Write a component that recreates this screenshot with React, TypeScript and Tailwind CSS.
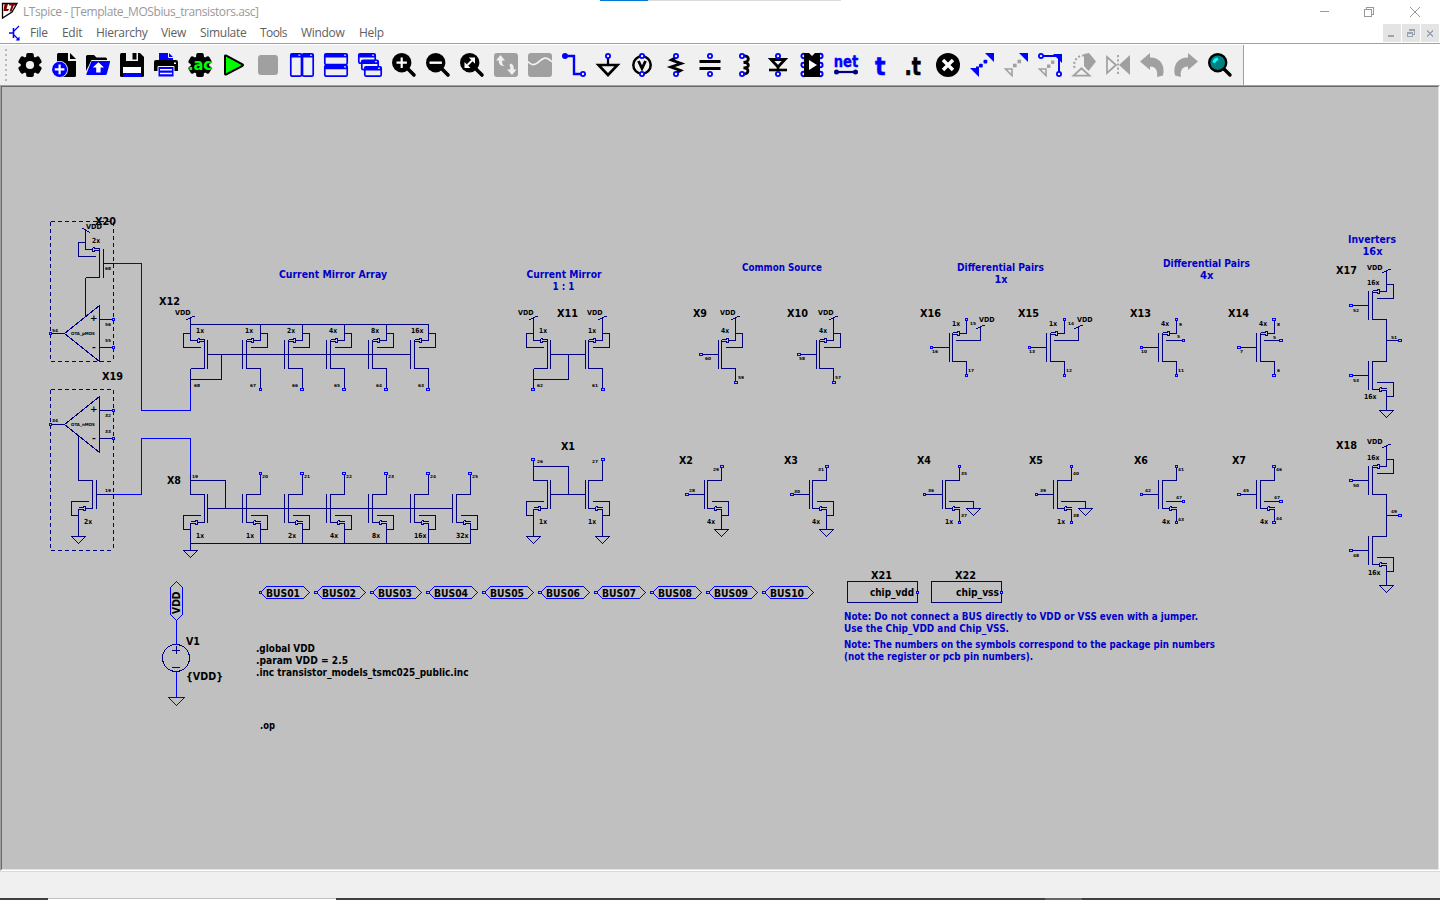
import React from "react";

const NAVY = "#000080";
const BLUE = "#0000ff";
const B = "#0000ff";
const G = "#a0a0a0";

/* ---------- toolbar icons, each on a 24 x 24 grid ---------- */

const Gear = ({ hole }: { hole: boolean }) => (
  <g>
    <circle cx="12" cy="12" r="9.3" />
    <rect x="8.2" y="0" width="7.6" height="24" rx="1.8" />
    <rect x="8.2" y="0" width="7.6" height="24" rx="1.8" transform="rotate(60 12 12)" />
    <rect x="8.2" y="0" width="7.6" height="24" rx="1.8" transform="rotate(120 12 12)" />
    {hole && <circle cx="12" cy="12" r="4.1" fill="#f0f0f0" />}
  </g>
);

const Magnifier = () => (
  <g>
    <circle cx="9.7" cy="9.7" r="9.7" />
    <path d="M16 16L22 22" stroke="#000" strokeWidth="3.6" strokeLinecap="round" />
  </g>
);

const Pin = ({ x, y }: { x: number; y: number }) => (
  <circle cx={x} cy={y} r="2.1" fill="#f0f0f0" stroke={B} strokeWidth="1.8" />
);

const Win = ({ x, y, w, h }: { x: number; y: number; w: number; h: number }) => (
  <g>
    <rect x={x + 0.8} y={y + 0.8} width={w - 1.6} height={h - 1.6} rx="1.4" fill="#f0f0f0" stroke={B} strokeWidth="1.7" />
    <rect x={x + 0.5} y={y + 0.5} width={w - 1} height="4" rx="1" fill={B} />
    <path d={`M${x + w - 4} ${y + 2.2}h2`} stroke="#fff" strokeWidth="1" />
  </g>
);

const icons: React.ReactNode[] = [
  <Gear hole />,
  <g>
    <path d="M5 1.5Q5 0 6.5 0H16V8H24V22.5Q24 24 22.500 24H5z" />
    <path d="M18 0L24 6H18z" />
    <circle cx="7.6" cy="16.4" r="8.4" fill="#f0f0f0" />
    <circle cx="7.6" cy="16.4" r="7.6" fill={B} />
    <path d="M2.800 16.400h9.600M7.600 11.600v9.600" stroke="#fff" strokeWidth="2.2" />
  </g>,
  <g>
    <path d="M0 3.500Q0 2 1.500 2H8L10.500 4.500H19.500Q21 4.500 21 6V7H5.500L0 18z" />
    <path d="M5.500 8H23.500Q24.300 8 24 9.200L20.800 21Q20.500 22 19.300 22H1Q0 22 .4 21z" fill={B} />
    <path d="M12.400 9.200L18 14.500H14.600V19.500H10.200V14.500H6.800z" fill="#fff" />
  </g>,
  <g>
    <path d="M1.500 0H20L24 4V22.500Q24 24 22.500 24H1.500Q0 24 0 22.500V1.500Q0 0 1.500 0z" />
    <path d="M6 0H18V8H6z" fill="#f0f0f0" />
    <path d="M12.500 0H16.500V6.500H12.500z" />
    <path d="M3 14H21V20H3z" fill="#fff" />
    <path d="M3 20H21V24H3z" fill={B} />
  </g>,
  <g>
    <path d="M5 0H15L19 4V8H5z" fill={B} />
    <path d="M14.500 0V4.500H19" stroke="#f0f0f0" strokeWidth="1" fill="none" />
    <path d="M2 7H22Q24 7 24 9V18H0V9Q0 7 2 7z" />
    <path d="M4 13.500H20V24H4z" fill={B} stroke="#f0f0f0" strokeWidth="1" />
    <path d="M6 16.800H18M6 20.500H18" stroke="#fff" strokeWidth="1.500" />
    <rect x="20" y="9.500" width="2" height="1.500" fill="#fff" />
  </g>,
  <g>
    <Gear hole={false} />
    <text x="0" y="16.500" fontSize="16" fontWeight="700" fontFamily='"DejaVu Sans"' fill="#00ff00" textLength="24" lengthAdjust="spacingAndGlyphs">
      .ac
    </text>
  </g>,
  <path d="M3 3.200Q3 2 4.300 2.700L20.500 11.300Q21.600 12 20.500 12.800L4.300 21.300Q3 22 3 20.800z" fill="#00ff00" stroke="#000" strokeWidth="2" />,
  <rect x="2" y="2" width="20" height="20" rx="3" fill={G} />,
  <g>
    <Win x={0} y={0} w={12.3} h={24} />
    <Win x={11.7} y={0} w={12.3} h={24} />
  </g>,
  <g>
    <Win x={0} y={0} w={24} h={12.3} />
    <Win x={0} y={11.7} w={24} h={12.3} />
  </g>,
  <g>
    <Win x={0} y={0} w={18} h={11} />
    <Win x={3} y={6.500} w={18} h={11} />
    <Win x={6} y={13} w={18} h={11} />
  </g>,
  <g>
    <Magnifier />
    <path d="M4.500 9.700h10.400M9.700 4.500v10.400" stroke="#fff" strokeWidth="2.200" />
  </g>,
  <g>
    <Magnifier />
    <path d="M3.500 9.700h12.400" stroke="#fff" strokeWidth="2.400" />
  </g>,
  <g>
    <Magnifier />
    <path d="M7.500 12L12 7.500" stroke="#fff" strokeWidth="2" />
    <path d="M8.800 4.500H15V10.700zM4.500 9V15H10.500z" fill="#fff" />
  </g>,
  <g>
    <rect width="24" height="24" rx="3" fill={G} />
    <path d="M6.500 2L11 7.500H8.200V10Q8.500 12 10.500 13Q5 13 4.800 9V7.500H2zM18 22L22.500 16.500H19.700V14Q19.500 11.500 17 10.500Q14.500 11.500 16.300 14V16.500H13z" fill="#f0f0f0" />
  </g>,
  <g>
    <rect width="24" height="24" rx="3" fill={G} />
    <path d="M0 8.500C3 12.500 6 12.500 10 9.500C15 5 18 2.500 24 9" fill="none" stroke="#f0f0f0" strokeWidth="1.700" />
  </g>,
  <g>
    <path d="M2.500 3H12V21H19" fill="none" stroke={B} strokeWidth="2.400" />
    <circle cx="3" cy="3" r="3" fill={B} />
    <Pin x={21} y={21} />
  </g>,
  <g>
    <path d="M12 5V12" stroke="#000" strokeWidth="2.200" />
    <path d="M2.500 12H21.500L12 22z" fill="none" stroke="#000" strokeWidth="2.600" />
    <Pin x={12} y={3} />
  </g>,
  <g>
    <circle cx="12" cy="12" r="8.700" fill="none" stroke="#000" strokeWidth="2.500" />
    <path d="M8.500 8L12 15.500L15.500 8" fill="none" stroke="#000" strokeWidth="2.800" />
    <Pin x={12} y={3} />
    <Pin x={12} y={21} />
  </g>,
  <g>
    <path d="M12 4.500L7.500 7L17 10.500L7 14L16.500 17.500L12 20" fill="none" stroke="#000" strokeWidth="2.900" />
    <Pin x={12} y={3} />
    <Pin x={12} y={21} />
  </g>,
  <g>
    <path d="M1.500 8.500H22.500M1.500 15.500H22.500" stroke="#000" strokeWidth="3" />
    <Pin x={12} y={3} />
    <Pin x={12} y={21} />
  </g>,
  <g>
    <path d="M11 3C18 2 18 9 11.500 9.500C18 9 18 15.500 11.500 14.800C18 15 17 21.500 11 21" fill="none" stroke="#000" strokeWidth="2.800" />
    <Pin x={10} y={3} />
    <Pin x={10} y={21} />
  </g>,
  <g>
    <path d="M5 6.500H19L12 14z" fill="none" stroke="#000" strokeWidth="2.800" />
    <path d="M3 17H21" stroke="#000" strokeWidth="2.600" />
    <path d="M12 14V18" stroke="#000" strokeWidth="2.500" />
    <Pin x={12} y={3} />
    <Pin x={12} y={21} />
  </g>,
  <g>
    {[3, 12, 21].map((y) => (
      <g key={y} fill="none" stroke={B} strokeWidth="1.900">
        <circle cx="3.600" cy={y} r="2.200" />
        <circle cx="20.400" cy={y} r="2.200" />
      </g>
    ))}
    <path d="M4 0H9L12 3L15 0H20V24H4z" />
    <path d="M9 7L17 12L9 17z" fill="#fff" />
  </g>,
  <g>
    <text x="-.3" y="13.500" fontSize="15" fontWeight="700" fontFamily='"DejaVu Sans"' fill={B} textLength="24.500" lengthAdjust="spacingAndGlyphs" stroke={B} strokeWidth=".4">
      net
    </text>
    <path d="M3 19H21" stroke={NAVY} strokeWidth="2.200" />
    <circle cx="2.500" cy="19" r="2.500" fill={NAVY} />
    <circle cx="21.500" cy="19" r="2.500" fill={NAVY} />
  </g>,
  <text x="7" y="21.500" fontSize="24" fontWeight="700" fontFamily='"DejaVu Sans"' fill={B} textLength="10.500" lengthAdjust="spacingAndGlyphs" stroke={B} strokeWidth=".5">
    t
  </text>,
  <text x="2.500" y="21.500" fontSize="24" fontWeight="700" fontFamily='"DejaVu Sans"' textLength="16.500" lengthAdjust="spacingAndGlyphs" stroke="#000" strokeWidth=".5">
    .t
  </text>,
  <g>
    <circle cx="12" cy="12" r="12" />
    <path d="M7 7L17 17M17 7L7 17" stroke="#fff" strokeWidth="3.400" />
  </g>,
  <g fill={B}>
    <path d="M15 0H24V9zM0 15H9V24z" />
    <rect x="9" y="10.700" width="3.800" height="3.800" rx="1" />
    <rect x="13.500" y="6.700" width="3.800" height="3.800" rx="1" />
    <rect x="6" y="13.500" width="3" height="3" />
  </g>,
  <g>
    <path d="M15 0H24V9z" fill={B} />
    <path d="M1.500 16H8V22.500z" fill="none" stroke={G} strokeWidth="1.600" />
    <rect x="9" y="10.700" width="3.600" height="3.600" fill={G} />
    <rect x="13.500" y="6.700" width="3.600" height="3.600" fill={G} />
  </g>,
  <g>
    <path d="M3 3H21V20" fill="none" stroke={B} strokeWidth="2" />
    <path d="M15 1H24V10z" fill={B} />
    <Pin x={3} y={3} />
    <Pin x={21} y={21} />
    <path d="M1.500 16H8V22.500z" fill="none" stroke={G} strokeWidth="1.600" />
    <rect x="9" y="11.500" width="3.400" height="3.400" fill={G} />
    <rect x="13" y="7.500" width="3.400" height="3.400" fill={G} />
  </g>,
  <g>
    <path d="M12 1L17 0L24 8.500L16.500 18L12 13z" fill={G} />
    <path d="M12 2.500A9.500 9.500 0 0 0 3 16" fill="none" stroke={G} strokeWidth="2" strokeDasharray="2 2" />
    <path d="M1.500 22.700L9.500 15.300L17.500 22.700z" fill="none" stroke={G} strokeWidth="1.800" />
  </g>,
  <g>
    <path d="M1 4L10 12L1 20z" fill="none" stroke={G} strokeWidth="1.700" />
    <path d="M24 2V22L13 12z" fill={G} />
    <path d="M12 2V22" stroke={G} strokeWidth="1.800" strokeDasharray="2.200 2" />
  </g>,
  <path d="M0 8.500L10 0V4.500C20 4.500 25.500 12 23 22.500L17 24C18 18 16 13.500 10 13.500V17z" fill={G} />,
  <path d="M24 8.500L14 0V4.500C4 4.500 -1.500 12 1 22.500L7 24C6 18 8 13.500 14 13.500V17z" fill={G} />,
  <g>
    <path d="M16 16L22 22" stroke="#000" strokeWidth="3.400" strokeLinecap="round" />
    <circle cx="9.700" cy="9.700" r="8.500" fill="#008080" stroke="#000" strokeWidth="2.400" />
    <path d="M4.500 9.500Q5 5 9.500 4.500L10.500 7Q8 8 7 10z" fill="#00ffff" />
  </g>,
];

/* ---------- schematic parts ---------- */

type FetProps = { x: number; y: number; p?: boolean; flip?: boolean; g?: number; loop?: boolean };

/* x: source/drain column, y: gate row */
const Fet = ({ x, y, p, flip, g = 18, loop = true }: FetProps) => {
  const m = flip ? -1 : 1;
  const v = p ? -1 : 1;
  const X = (n: number) => x + n * m;
  const Y = (n: number) => y + n * v;
  const s = Y(14);
  const tip = p ? -14 : 0;
  const mid = p ? -9 : -5;
  const shaft = p ? `M${x} ${s}H${X(-7)}` : `M${X(-14)} ${s}H${X(-7)}`;
  return (
    <g>
      <path d={`M${X(-14)} ${y - 14.5}V${y + 14.5}M${X(-g)} ${y - 14.5}V${y + 14.5}M${X(-14)} ${Y(-14)}H${x}`} />
      <path d={shaft} />
      <path d={`M${X(-7)} ${s - 2}V${s + 2}H${X(mid)}V${s + 1}H${X(tip)}M${X(-7)} ${s - 2}H${X(mid)}V${s - 1}H${X(tip)}`} />
      {loop && <path d={`M${X(-10)} ${Y(7)}H${X(7)}V${Y(21)}H${x}M${x} ${Y(14)}V${Y(21)}`} />}
    </g>
  );
};

const Gnd = ({ x, y }: { x: number; y: number }) => <path d={`M${x - 7} ${y}H${x + 7}L${x} ${y + 7}z`} />;
const Vdd = ({ x, y }: { x: number; y: number }) => <path d={`M${x - 4} ${y + 1}L${x + 4} ${y - 2.5}`} />;

const fets: FetProps[] = [
  { x: 85.5, y: 263.5, p: true, flip: true },
  { x: 78.5, y: 494.5, flip: true },
  { x: 190.5, y: 354.5, p: true, flip: true, g: 17 },
  ...[260.5, 302.5, 344.5, 386.5, 428.5].map((x) => ({ x, y: 354.5, p: true })),
  { x: 190.5, y: 508.5, flip: true, g: 17 },
  ...[260.5, 302.5, 344.5, 386.5, 428.5, 470.5].map((x) => ({ x, y: 508.5 })),
  { x: 533.5, y: 354.5, p: true, flip: true, g: 17 },
  { x: 602.5, y: 354.5, p: true, g: 17 },
  { x: 533.5, y: 494.5, flip: true, g: 17 },
  { x: 602.5, y: 494.5, g: 17 },
  { x: 735.5, y: 354.5, p: true, g: 17 },
  { x: 833.5, y: 354.5, p: true, g: 17 },
  { x: 721.5, y: 494.5, g: 17 },
  { x: 826.5, y: 494.5, g: 17 },
  { x: 966.5, y: 347.5, p: true, g: 17, loop: false },
  { x: 1064.5, y: 347.5, p: true, loop: false },
  { x: 1176.5, y: 347.5, p: true, loop: false },
  { x: 1274.5, y: 347.5, p: true, loop: false },
  { x: 959.5, y: 494.5, g: 17, loop: false },
  { x: 1071.5, y: 494.5, loop: false },
  { x: 1176.5, y: 494.5, loop: false },
  { x: 1274.5, y: 494.5, loop: false },
  { x: 1386.5, y: 305.5, p: true },
  { x: 1386.5, y: 375.5 },
  { x: 1386.5, y: 480.5, p: true },
  { x: 1386.5, y: 550.5 },
];

const wires = [
  // X20 and X19
  "M85.5 230V249.5M85.5 277.5V316.5M103.5 263.5H113.5M99.5 319.5H113.5M99.5 347.5H113.5M50.5 333.5H64.5M82 228L90 232.5",
  "M99.5 305.5V361.5L64.5 333.5z",
  "M99.5 396.5V452.5L64.5 424.5zM99.5 410.5H113.5M99.5 438.5H113.5M50.5 424.5H64.5",
  "M78.5 434.5V480.5M78.5 508.5V536.5M96.5 494.5H113.5",
  // X12
  "M190.5 318V340.5M190.5 324.5H428.5M190.5 368.5V389.5M190.5 379.5H221.5V354.5M207.5 354.5H410.5",
  ...[260.5, 302.5, 344.5, 386.5, 428.5].map((x) => `M${x} 324V340.5M${x} 368.5V388`),
  // X8
  "M190.5 474V494.5M190.5 480.5H225.5V508.5M207.5 508.5H452.5M190.5 522.5V550.5M190.5 543.5H471",
  ...[260.5, 302.5, 344.5, 386.5, 428.5, 470.5].map((x) => `M${x} 475V494.5M${x} 522.5V543.5`),
  // X11 and X1
  "M533.5 317V340.5M602.5 317V340.5M533.5 368.5V388M602.5 368.5V388M533.5 379.5H568.5V354.5M550.5 354.5H585.5",
  "M533.5 461V480.5M602.5 461V480.5M533.5 466.5H568.5V494.5M550.5 494.5H585.5M533.5 508.5V536.5M602.5 508.5V536.5",
  // X9, X10, X2, X3
  "M735.5 317V340.5M735.5 368.5V381M703 354.5H718.5M833.5 317V340.5M833.5 368.5V381M801 354.5H816.5",
  "M721.5 468V480.5M721.5 508.5V529.5M689 494.5H704.5M826.5 468V480.5M826.5 508.5V529.5M794 494.5H809.5",
  // differential pairs
  "M966.5 321V333.5M966.5 361.5V374M933 347.5H949.5M956 340.5H980.5V326M1064.5 321V333.5M1064.5 361.5V374M1031 347.5H1046.5M1054 340.5H1078.5V326",
  "M1176.5 321V333.5M1176.5 361.5V374M1143 347.5H1158.5M1166 340.5H1182M1274.5 321V333.5M1274.5 361.5V374M1241 347.5H1256.5M1264 340.5H1280",
  "M959.5 468V480.5M959.5 508.5V521M926 494.5H942.5M949 501.5H973.5V508.5M1071.5 468V480.5M1071.5 508.5V521M1038 494.5H1053.5M1061 501.5H1085.5V508.5",
  "M1176.5 468V480.5M1176.5 508.5V521M1143 494.5H1158.5M1166 501.5H1182M1274.5 468V480.5M1274.5 508.5V521M1241 494.5H1256.5M1264 501.5H1280",
  // inverters
  "M1386.5 270V291.5M1386.5 319.5V361.5M1386.5 340.5H1399M1386.5 389.5V410.5M1353 305.5H1368.5M1353 375.5H1368.5",
  "M1386.5 445V466.5M1386.5 494.5V536.5M1386.5 515.5H1399M1386.5 564.5V585.5M1353 480.5H1368.5M1353 550.5H1368.5",
  // chip rails
  "M847.5 581.5H917.5V602.5H847.5zM931.5 581.5H1001.5V602.5H931.5z",
];

const grounds = [
  [78.5, 536.5], [190.5, 550.5], [533.5, 536.5], [602.5, 536.5], [721.5, 529.5], [826.5, 529.5],
  [973.5, 508.5], [1085.5, 508.5], [1386.5, 410.5], [1386.5, 585.5],
];

const rails = [
  [190.5, 318.5], [533.5, 318.5], [602.5, 318.5], [735.5, 318.5], [833.5, 318.5],
  [980.5, 327.5], [1078.5, 327.5], [1386.5, 271.5], [1386.5, 446.5],
];

/* left edge, centre row, width of the outline */
const pins: [number, number, number][] = [
  [259.5, 389.5, 2], [300.5, 389.5, 3], [342.5, 389.5, 3], [384.5, 389.5, 3], [426.5, 389.5, 3],
  [259.5, 473.5, 2], [300.5, 473.5, 3], [342.5, 473.5, 3], [384.5, 473.5, 3], [426.5, 473.5, 3], [468.5, 473.5, 3],
  [531.5, 389.5, 3], [601.5, 389.5, 3], [531.5, 459.5, 3], [601.5, 459.5, 3],
  [699.5, 354.5, 3], [734.5, 382.5, 3], [797.5, 354.5, 3], [832.5, 382.5, 3],
  [685.5, 494.5, 3], [720.5, 466.5, 3], [790.5, 494.5, 3], [825.5, 466.5, 3],
  [930.5, 347.5, 2], [965.5, 319.5, 2], [965.5, 375.5, 2], [1028.5, 347.5, 2], [1063.5, 319.5, 2], [1063.5, 375.5, 2],
  [1140.5, 347.5, 2], [1175.5, 319.5, 2], [1175.5, 375.5, 2], [1182.5, 340.5, 2],
  [1237.5, 347.5, 3], [1272.5, 319.5, 3], [1272.5, 375.5, 3], [1279.5, 340.5, 3],
  [923.5, 494.5, 2], [958.5, 466.5, 2], [958.5, 522.5, 2], [1035.5, 494.5, 2], [1070.5, 466.5, 2], [1070.5, 522.5, 2],
  [1140.5, 494.5, 2], [1175.5, 466.5, 2], [1175.5, 522.5, 2], [1182.5, 501.5, 2],
  [1237.5, 494.5, 3], [1272.5, 466.5, 3], [1272.5, 522.5, 3], [1279.5, 501.5, 3],
  [1349.5, 305.5, 3], [1349.5, 375.5, 3], [1398.5, 340.5, 3], [1349.5, 480.5, 3], [1349.5, 550.5, 3], [1398.5, 515.5, 3],
  [112.5, 319.5, 2], [112.5, 347.5, 2], [49.5, 333.5, 2], [112.5, 410.5, 2], [112.5, 438.5, 2], [49.5, 424.5, 2],
  [916.5, 592.5, 2], [1000.5, 592.5, 2],
];

type Label = [string, number, number, number];

const headings: Label[] = [
  ["Current Mirror Array", 279, 278, 108], ["Current Mirror", 526.5, 278, 75], ["1 : 1", 552.5, 290, 22],
  ["Common Source", 742, 271, 80], ["Differential Pairs", 957, 271, 87], ["1x", 994.5, 283, 13],
  ["Differential Pairs", 1163, 267, 87], ["4x", 1200, 279, 13.5], ["Inverters", 1348, 243, 48], ["16x", 1362.5, 255, 20],
  ["Note: Do not connect a BUS directly to VDD or VSS even with a jumper.", 844, 620, 354],
  ["Use the Chip_VDD and Chip_VSS.", 844, 632, 165],
  ["Note: The numbers on the symbols correspond to the package pin numbers", 844, 648, 371],
  ["(not the register or pcb pin numbers).", 844, 660, 189],
];

const names: Label[] = [
  ["X20", 95, 225, 21], ["X19", 102, 380, 21], ["X12", 159, 305, 21], ["X8", 167, 484, 14], ["X11", 557, 317, 21],
  ["X1", 561, 450, 14], ["X9", 693, 317, 14], ["X10", 787, 317, 21], ["X2", 679, 464, 14], ["X3", 784, 464, 14],
  ["X16", 920, 317, 21], ["X15", 1018, 317, 21], ["X13", 1130, 317, 21], ["X14", 1228, 317, 21],
  ["X4", 917, 464, 14], ["X5", 1029, 464, 14], ["X6", 1134, 464, 14], ["X7", 1232, 464, 14],
  ["X17", 1336, 274, 21], ["X18", 1336, 449, 21], ["X21", 871, 579, 21], ["X22", 955, 579, 21],
  ["chip_vdd", 870, 596, 44], ["chip_vss", 956, 596, 43],
  ["V1", 186, 645, 14], ["{VDD}", 186, 680, 37],
  [".global VDD", 256, 652, 59], [".param VDD = 2.5", 256, 664, 92],
  [".inc transistor_models_tsmc025_public.inc", 256, 676, 212.5], [".op", 260, 729, 15],
];

const small: Label[] = [
  ["VDD", 86, 229, 16], ["VDD", 175, 315, 15.5], ["VDD", 518, 315, 15.5], ["VDD", 587, 315, 15.5], ["VDD", 720, 315, 15.5],
  ["VDD", 818, 315, 15.5], ["VDD", 979, 322, 15.5], ["VDD", 1077, 322, 15.5], ["VDD", 1367, 270, 15.5], ["VDD", 1367, 444, 15.5],
  ["2x", 92, 243, 8], ["2x", 84, 524, 8],
  ["1x", 196, 333, 8], ["1x", 245, 333, 8], ["2x", 287, 333, 8], ["4x", 329, 333, 8], ["8x", 371, 333, 8], ["16x", 411, 333, 12.5],
  ["1x", 196, 538, 8], ["1x", 246, 538, 8], ["2x", 288, 538, 8], ["4x", 330, 538, 8], ["8x", 372, 538, 8], ["16x", 414, 538, 12.5], ["32x", 456, 538, 12.5],
  ["1x", 539, 333, 8], ["1x", 588, 333, 8], ["1x", 539, 524, 8], ["1x", 588, 524, 8],
  ["4x", 721, 333, 8], ["4x", 819, 333, 8], ["4x", 707, 524, 8], ["4x", 812, 524, 8],
  ["1x", 952, 326, 8], ["1x", 1049, 326, 8], ["4x", 1161, 326, 8], ["4x", 1259, 326, 8],
  ["1x", 945, 524, 8], ["1x", 1057, 524, 8], ["4x", 1162, 524, 8], ["4x", 1260, 524, 8],
  ["16x", 1367, 285, 12.5], ["16x", 1364, 399, 12.5], ["16x", 1367, 460, 12.5], ["16x", 1368, 575, 12.5],
];

const tiny: Label[] = [
  ["68", 105, 270, 6], ["54", 52, 332, 6], ["56", 105, 326, 6], ["55", 105, 342, 6],
  ["34", 52, 422, 6], ["32", 105, 417, 6], ["33", 105, 433, 6], ["19", 105, 492, 6],
  ["68", 194, 387, 6], ["67", 250, 387, 6], ["66", 292, 387, 6], ["65", 334, 387, 6], ["64", 376, 387, 6], ["63", 418, 387, 6],
  ["19", 192, 478, 6], ["20", 262, 478, 6], ["21", 304, 478, 6], ["22", 346, 478, 6], ["23", 388, 478, 6], ["24", 430, 478, 6], ["25", 472, 478, 6],
  ["62", 537, 387, 6], ["61", 592, 387, 6], ["26", 537, 463, 6], ["27", 592, 463, 6],
  ["60", 705, 360, 6], ["59", 738, 379, 6], ["58", 799, 360, 6], ["57", 835, 379, 6],
  ["29", 713, 471, 6], ["28", 689, 492, 6], ["31", 818, 471, 6], ["30", 794, 493, 6],
  ["16", 932, 353, 6], ["15", 970, 325, 6], ["17", 968, 372, 6], ["13", 1029, 353, 6], ["14", 1068, 325, 6], ["12", 1066, 372, 6],
  ["9", 1179, 326, 3], ["5", 1177, 338, 3], ["10", 1141, 353, 6], ["11", 1178, 372, 6],
  ["8", 1277, 326, 3], ["5", 1273, 339, 3], ["7", 1240, 353, 3], ["6", 1277, 372, 3],
  ["36", 928, 492, 6], ["35", 961, 475, 6], ["37", 961, 517, 6], ["39", 1040, 492, 6], ["40", 1073, 475, 6], ["38", 1073, 517, 6],
  ["42", 1145, 492, 6], ["41", 1178, 471, 6], ["47", 1176, 499, 6], ["43", 1178, 521, 6],
  ["45", 1243, 492, 6], ["46", 1276, 471, 6], ["47", 1274, 499, 6], ["44", 1276, 520, 6],
  ["52", 1353, 312, 6], ["53", 1353, 382, 6], ["51", 1391, 339, 6], ["50", 1353, 487, 6], ["48", 1353, 557, 6], ["49", 1391, 513, 6],
  ["OTA_pMOS", 71, 335, 24], ["OTA_nMOS", 71, 426, 24],
];

const buses = ["BUS01", "BUS02", "BUS03", "BUS04", "BUS05", "BUS06", "BUS07", "BUS08", "BUS09", "BUS10"];

const Labels = ({ items, size, fill }: { items: Label[]; size: number; fill: string }) => (
  <g fontSize={size} fill={fill}>
    {items.map(([t, x, y, w], i) => (
      <text key={i} x={x} y={y} textLength={w} lengthAdjust="spacingAndGlyphs">
        {t}
      </text>
    ))}
  </g>
);

const Schematic = () => (
  <svg
    className="block h-[782px] w-[1436px] bg-[#c0c0c0]"
    viewBox="2 87 1436 782"
    fontFamily='"DejaVu Sans", sans-serif'
    fontWeight="700"
  >
    <g fill="none" stroke={NAVY} strokeWidth="1" shapeRendering="crispEdges">
      {wires.map((d, i) => <path key={i} d={d} />)}
      {fets.map((f, i) => <Fet key={i} {...f} />)}
      {grounds.map(([x, y], i) => <Gnd key={i} x={x} y={y} />)}
      {rails.map(([x, y], i) => <Vdd key={i} x={x} y={y} />)}
      <path strokeDasharray="4 3" d="M50.5 221.5H113.5V361.5M50.5 221.5V361.5H113.5M50.5 389.5H113.5V550.5M50.5 389.5V550.5H113.5" />
      <circle cx="176" cy="658" r="13.5" />
      <path d="M172 650.5H180M176.5 646V654M172 667.5H180" />
    </g>
    <g fill="none" stroke={BLUE} strokeWidth="1" shapeRendering="crispEdges">
      <path d="M113.5 263.5H141.5V410.5H190.5V389M113.5 494.500H141.5V438.5H190.5V474" />
      <path d="M176.5 581.5L182.5 587.5V614.5L176.5 620.5L170.5 614.5V587.5zM176.5 620.5V644.5M176.5 671.5V697.5M168.500 697.5H184.5L176.5 705.500z" />
      {buses.map((b, i) => {
        const x = 260 + i * 56;
        return <path key={b} d={`M${x + 0.5} 592.5L${x + 6.5} 586.5H${x + 43.5}L${x + 49.5} 592.5L${x + 43.5} 598.5H${x + 6.5}z`} />;
      })}
      {buses.map((b, i) => (
        <rect key={b} x={i === 0 ? 259.5 : 258.5 + i * 56} y="591.5" width={i === 0 ? 2 : 3} height="2" fill="#c0c0c0" />
      ))}
      {pins.map(([x, y, w], i) => <rect key={i} x={x} y={y - 1} width={w} height="2" fill="#c0c0c0" />)}
    </g>
    <Labels items={headings} size={10} fill="#0000c8" />
    <Labels items={names} size={10} fill="#000" />
    <Labels items={small} size={7} fill="#000" />
    <Labels items={tiny} size={4.2} fill="#000" />
    <Labels items={buses.map((b, i) => [b, 266 + i * 56, 596.5, 34] as Label)} size={10} fill="#000" />
    <g fontSize="9" fill="#000">
      <text x="90" y="321">+</text>
      <text x="92" y="350">-</text>
      <text x="90" y="412">+</text>
      <text x="92" y="441">-</text>
    </g>
    <text transform="translate(180 614) rotate(-90)" fontSize="10" textLength="22.500" lengthAdjust="spacingAndGlyphs">
      VDD
    </text>
  </svg>
);

/* ---------- window frame ---------- */

const Menu = ({ w, children }: { w: string; children: React.ReactNode }) => <span className={w}>{children}</span>;

const MdiButton = ({ children }: { children: React.ReactNode }) => (
  <div className="flex h-[18px] w-[18px] items-center justify-center bg-[#e4e4e4]">
    <svg width="18" height="18" viewBox="0 0 18 18" fill="none" stroke="#96a4b4" shapeRendering="crispEdges">
      {children}
    </svg>
  </div>
);

export default function App() {
  return (
    <div className="flex h-[900px] w-[1440px] flex-col overflow-hidden bg-white font-['Open_Sans','Noto_Sans',sans-serif] text-[12px]">
      <div className="flex h-px pl-[600px]">
        <div className="w-12 bg-[#0078d4]" />
        <div className="w-[193px] bg-[#dcdcdc]" />
      </div>
      <div className="flex h-[22px] items-center">
        <svg width="20" height="22" viewBox="0 1 20 22" className="shrink-0">
          <path d="M2.500 3.500V18L12 12L17 3.500z" fill="#fff" stroke="#000" strokeWidth="1.300" />
          <path d="M4.500 4H8L6.500 9H9L8 11H3.500zM9.500 3.500H17L15.800 5.500H13.800L11.500 11.500H9.500L11.500 5.500H9z" fill="#800000" />
        </svg>
        <span className="ml-[3px] w-[240px] whitespace-nowrap tracking-[-0.41px] text-[#999999]">LTspice - [Template_MOSbius_transistors.asc]</span>
        <div className="flex-1" />
        <svg width="120" height="20" viewBox="0 0 120 20" fill="none" stroke="#999" shapeRendering="crispEdges" className="shrink-0">
          <path d="M-1 9.500H9" />
          <path d="M44.500 7.500H51.500V14.500H44.500zM46.500 7V5.500H53.500V12.500H52" />
          <path d="M90 5L100 15M100 5L90 15" shapeRendering="auto" />
        </svg>
      </div>
      <div className="flex h-5 items-center text-[#606060]">
        <svg width="22" height="18" viewBox="0 0 22 18" fill="none" stroke={BLUE} className="shrink-0">
          <path d="M9 9H13.500M13.500 4V14" strokeWidth="1.600" />
          <path d="M14 7L19 2M14 11L19 16" strokeWidth="1.200" />
          <path d="M19.500 16.500V12.500L15.500 16.500z" fill={BLUE} stroke="none" />
        </svg>
        <div className="flex pl-2 tracking-[-0.3px] whitespace-nowrap">
          <Menu w="w-8">File</Menu>
          <Menu w="w-[34px]">Edit</Menu>
          <Menu w="w-[65px]">Hierarchy</Menu>
          <Menu w="w-[39px]">View</Menu>
          <Menu w="w-[60px]">Simulate</Menu>
          <Menu w="w-[41px] tracking-[-0.6px]">Tools</Menu>
          <Menu w="w-[58px]">Window</Menu>
          <Menu w="w-10">Help</Menu>
        </div>
        <div className="flex-1" />
        <div className="flex gap-px self-start pt-px pr-px">
          <MdiButton><path d="M5 12H11" strokeWidth="2" /></MdiButton>
          <MdiButton>
            <path d="M5.500 8.500H10.500V12.500H5.500zM5 9.500H11M7.500 7V5.500H12.500V10.500H11M7 6.500H13" />
          </MdiButton>
          <MdiButton><path d="M6 6.500L12 12.500M12 6.500L6 12.500" strokeWidth="2" /></MdiButton>
        </div>
      </div>
      <div className="h-[2px] border-t border-[#a0a0a0] bg-white" />
      <div className="flex h-10">
        <div className="flex w-[1244px] items-center border-r border-[#a0a0a0] bg-[#f0f0f0]">
          <div className="ml-[5px] flex h-8 w-[2px] flex-col justify-between">
            {[0, 1, 2, 3, 4, 5, 6].map((n) => <div key={n} className="h-[2px] w-[2px] bg-[#b8b8b8]" />)}
          </div>
          <div className="ml-[11px] flex gap-[10px]">
            {icons.map((icon, i) => (
              <svg key={i} width="24" height="24" viewBox="0 0 24 24" className="block shrink-0 overflow-visible">
                {icon}
              </svg>
            ))}
          </div>
        </div>
      </div>
      <div className="h-[786px] border border-t-[#a0a0a0] border-r-white border-b-white border-l-[#a0a0a0]">
        <div className="h-[784px] border border-t-[#696969] border-r-[#e3e3e3] border-b-[#e3e3e3] border-l-[#696969]">
          <Schematic />
        </div>
      </div>
      <div className="h-[27px] border-t border-[#d8d8d8] bg-[#f0f0f0]" />
      <div className="flex h-[2px] bg-[#404040]">
        <div className="ml-12 w-[288px] border-t border-[#c0c0c0] bg-white" />
        <div className="ml-[709px] w-[37px] bg-[#666666]" />
      </div>
    </div>
  );
}
